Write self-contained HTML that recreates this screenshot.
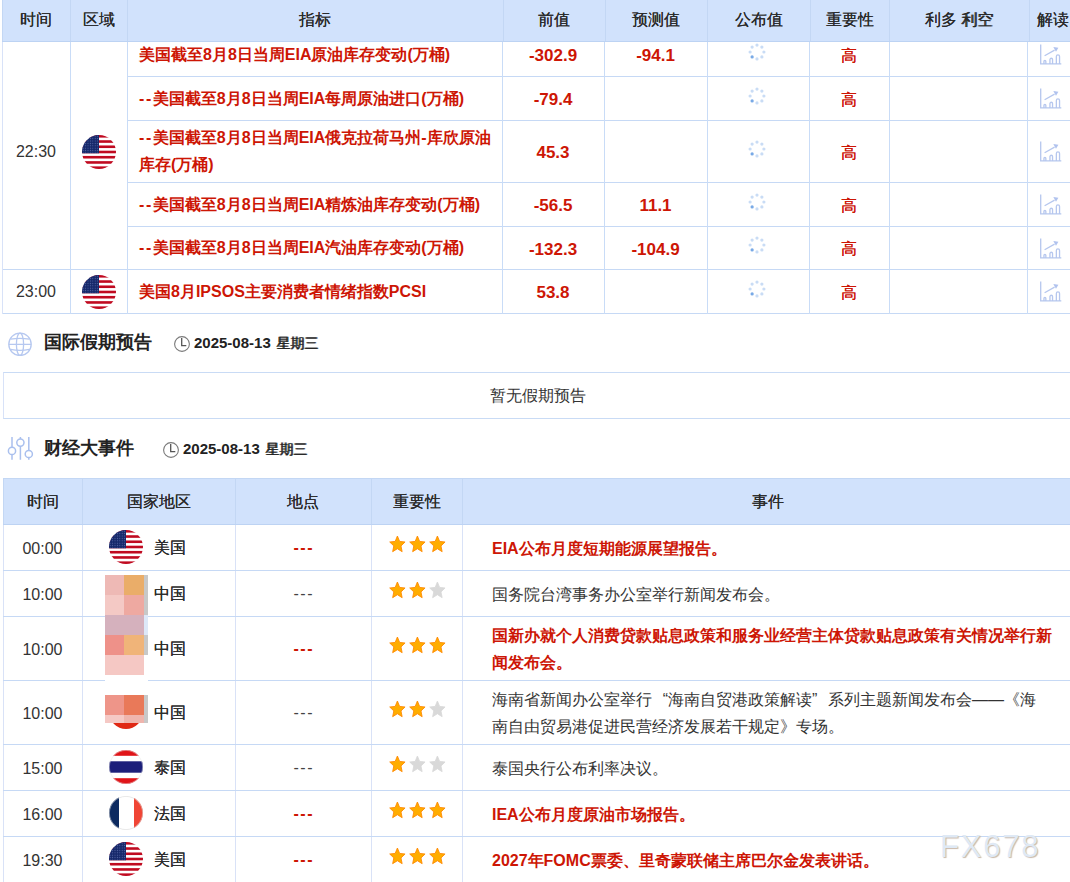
<!DOCTYPE html>
<html><head><meta charset="utf-8">
<style>
html,body{margin:0;padding:0;background:#fff}
body{width:1070px;height:882px;overflow:hidden;position:relative;font-family:"Liberation Sans",sans-serif;color:#333}
.a{position:absolute}
.hl{position:absolute;height:1px;background:#c6d9f5}
.vl{position:absolute;width:1px;background:#c9dcf7}
.hv{position:absolute;width:1px;background:#c3d7f4}
.hd{position:absolute;background:#d1e2fc}
.c{position:absolute;text-align:center;white-space:nowrap}
.t{position:absolute;white-space:nowrap}
.red{color:#cd1605;font-weight:bold}
.h16{font-size:16px}
</style></head><body>

<svg width="0" height="0" style="position:absolute">
<defs>
<clipPath id="cc"><circle cx="17" cy="17" r="17"/></clipPath>
<pattern id="stars" width="2.4" height="2.4" patternUnits="userSpaceOnUse"><rect width="2.4" height="2.4" fill="#16286a"/><circle cx="1.2" cy="1.2" r="0.55" fill="#5a6aa8"/></pattern>
<symbol id="us" viewBox="0 0 34 34">
<g clip-path="url(#cc)">
<rect width="34" height="34" fill="#fff"/>
<rect y="0" width="34" height="2.6" fill="#c00a20"/>
<rect y="5.23" width="34" height="2.6" fill="#c00a20"/>
<rect y="10.46" width="34" height="2.6" fill="#c00a20"/>
<rect y="15.69" width="34" height="2.6" fill="#c00a20"/>
<rect y="20.92" width="34" height="2.6" fill="#c00a20"/>
<rect y="26.15" width="34" height="2.6" fill="#c00a20"/>
<rect y="31.38" width="34" height="2.62" fill="#c00a20"/>
<rect width="17" height="18.3" fill="url(#stars)"/>
</g>
</symbol>
<symbol id="th" viewBox="0 0 34 34">
<g clip-path="url(#cc)">
<rect width="34" height="34" fill="#fff"/>
<rect y="0" width="34" height="5.8" fill="#e01418"/>
<rect y="11.3" width="34" height="11.4" fill="#1c1f7a"/>
<rect y="28.2" width="34" height="5.8" fill="#e01418"/>
</g>
<circle cx="17" cy="17" r="16.6" fill="none" stroke="#e4e4e4" stroke-width="0.8" stroke-opacity="0.6"/>
</symbol>
<symbol id="fr" viewBox="0 0 34 34">
<g clip-path="url(#cc)">
<rect width="34" height="34" fill="#fff"/>
<rect x="0" width="10" height="34" fill="#0c2a60"/>
<rect x="25" width="9" height="34" fill="#f04535"/>
</g>
<circle cx="17" cy="17" r="16.6" fill="none" stroke="#d8d8d8" stroke-width="0.8" stroke-opacity="0.7"/>
</symbol>
<symbol id="spin" viewBox="-10 -10 20 20">
<g fill="#c9dcf5">
<circle cx="0" cy="-6.9" r="1.6"/>
<circle cx="4.88" cy="-4.88" r="1.6"/>
<circle cx="6.9" cy="0" r="1.6"/>
<circle cx="4.88" cy="4.88" r="1.6"/>
<circle cx="0" cy="6.9" r="1.6"/>
<circle cx="-6.9" cy="0" r="1.6"/>
<circle cx="-4.88" cy="-4.88" r="1.6"/>
</g>
<circle cx="-4.88" cy="4.88" r="1.65" fill="#78a9e6"/>
</symbol>
<symbol id="chart" viewBox="0 0 24 24">
<g fill="none" stroke="#b6c7ee" stroke-width="1.3">
<path d="M1.7 0.5V19.9H22.3"/>
<path d="M4.95 20V17.4a0.95 0.95 0 0 1 1.9 0V20"/>
<path d="M10.95 20V15.55a1.3 1.3 0 0 1 2.6 0V20"/>
<path d="M17.35 20V12.45a1.6 1.6 0 0 1 3.2 0V20"/>
<path d="M5.6 11.7L15.6 6.1"/>
</g>
<path d="M14.3 2.9L19.4 3.8L17 7.7Z" fill="#b0c2ee"/>
</symbol>
<symbol id="star" viewBox="0 0 16 16" preserveAspectRatio="none">
<path d="M8.00 0.90L10.12 5.69L15.32 6.22L11.42 9.71L12.53 14.83L8.00 12.20L3.47 14.83L4.58 9.71L0.68 6.22L5.88 5.69Z" fill="#ffad00" stroke="#ff8800" stroke-width="0.8" stroke-linejoin="round"/>
</symbol>
<symbol id="stargr" viewBox="0 0 16 16" preserveAspectRatio="none">
<path d="M8.00 0.90L10.12 5.69L15.32 6.22L11.42 9.71L12.53 14.83L8.00 12.20L3.47 14.83L4.58 9.71L0.68 6.22L5.88 5.69Z" fill="#d9d9d9" stroke="#d9d9d9" stroke-width="0.8" stroke-linejoin="round"/>
</symbol>
</defs>
</svg>

<div class="hl" style="left:127px;top:76px;width:943px"></div>
<div class="hl" style="left:127px;top:120px;width:943px"></div>
<div class="hl" style="left:127px;top:182px;width:943px"></div>
<div class="hl" style="left:127px;top:226px;width:943px"></div>
<div class="hl" style="left:2px;top:269px;width:1068px"></div>
<div class="hl" style="left:2px;top:313px;width:1068px"></div>
<div class="vl" style="left:2px;top:0px;height:314px;background:#d8e2f8"></div>
<div class="vl" style="left:70px;top:0px;height:314px"></div>
<div class="vl" style="left:127px;top:0px;height:314px"></div>
<div class="vl" style="left:502px;top:0px;height:314px"></div>
<div class="vl" style="left:604px;top:0px;height:314px"></div>
<div class="vl" style="left:707px;top:0px;height:314px"></div>
<div class="vl" style="left:809px;top:0px;height:314px"></div>
<div class="vl" style="left:889px;top:0px;height:314px"></div>
<div class="vl" style="left:1027px;top:0px;height:314px"></div>
<div class="t red" style="left:139px;top:40.5px;font-size:16px;line-height:27px">美国截至8月8日当周EIA原油库存变动(万桶)</div>
<div class="c red" style="left:502px;width:102px;top:42.0px;font-size:17px;line-height:27px">-302.9</div>
<div class="c red" style="left:604px;width:103px;top:42.0px;font-size:17px;line-height:27px">-94.1</div>
<svg class="a" style="left:747px;top:41.8px" width="20" height="20"><use href="#spin"/></svg>
<div class="c" style="left:809px;width:80px;top:41.5px;font-size:16px;line-height:27px;color:#cd1605;text-shadow:0.45px 0 0 #cd1605">高</div>
<svg class="a" style="left:1039.1px;top:44.0px" width="24" height="24"><use href="#chart"/></svg>
<div class="t red" style="left:139px;top:84.5px;font-size:16px;line-height:27px"><span style="letter-spacing:1.6px">--</span>美国截至8月8日当周EIA每周原油进口(万桶)</div>
<div class="c red" style="left:502px;width:102px;top:86.0px;font-size:17px;line-height:27px">-79.4</div>
<svg class="a" style="left:747px;top:85.8px" width="20" height="20"><use href="#spin"/></svg>
<div class="c" style="left:809px;width:80px;top:85.5px;font-size:16px;line-height:27px;color:#cd1605;text-shadow:0.45px 0 0 #cd1605">高</div>
<svg class="a" style="left:1039.1px;top:88.0px" width="24" height="24"><use href="#chart"/></svg>
<div class="t red" style="left:139px;top:124.0px;font-size:16px;line-height:27px"><span style="letter-spacing:1.6px">--</span>美国截至8月8日当周EIA俄克拉荷马州-库欣原油<br>库存(万桶)</div>
<div class="c red" style="left:502px;width:102px;top:139.0px;font-size:17px;line-height:27px">45.3</div>
<svg class="a" style="left:747px;top:138.8px" width="20" height="20"><use href="#spin"/></svg>
<div class="c" style="left:809px;width:80px;top:138.5px;font-size:16px;line-height:27px;color:#cd1605;text-shadow:0.45px 0 0 #cd1605">高</div>
<svg class="a" style="left:1039.1px;top:141.0px" width="24" height="24"><use href="#chart"/></svg>
<div class="t red" style="left:139px;top:190.5px;font-size:16px;line-height:27px"><span style="letter-spacing:1.6px">--</span>美国截至8月8日当周EIA精炼油库存变动(万桶)</div>
<div class="c red" style="left:502px;width:102px;top:192.0px;font-size:17px;line-height:27px">-56.5</div>
<div class="c red" style="left:604px;width:103px;top:192.0px;font-size:17px;line-height:27px">11.1</div>
<svg class="a" style="left:747px;top:191.8px" width="20" height="20"><use href="#spin"/></svg>
<div class="c" style="left:809px;width:80px;top:191.5px;font-size:16px;line-height:27px;color:#cd1605;text-shadow:0.45px 0 0 #cd1605">高</div>
<svg class="a" style="left:1039.1px;top:194.0px" width="24" height="24"><use href="#chart"/></svg>
<div class="t red" style="left:139px;top:234.0px;font-size:16px;line-height:27px"><span style="letter-spacing:1.6px">--</span>美国截至8月8日当周EIA汽油库存变动(万桶)</div>
<div class="c red" style="left:502px;width:102px;top:235.5px;font-size:17px;line-height:27px">-132.3</div>
<div class="c red" style="left:604px;width:103px;top:235.5px;font-size:17px;line-height:27px">-104.9</div>
<svg class="a" style="left:747px;top:235.3px" width="20" height="20"><use href="#spin"/></svg>
<div class="c" style="left:809px;width:80px;top:235.0px;font-size:16px;line-height:27px;color:#cd1605;text-shadow:0.45px 0 0 #cd1605">高</div>
<svg class="a" style="left:1039.1px;top:237.5px" width="24" height="24"><use href="#chart"/></svg>
<div class="t red" style="left:139px;top:277.5px;font-size:16px;line-height:27px">美国8月IPSOS主要消费者情绪指数PCSI</div>
<div class="c red" style="left:502px;width:102px;top:279.0px;font-size:17px;line-height:27px">53.8</div>
<svg class="a" style="left:747px;top:278.8px" width="20" height="20"><use href="#spin"/></svg>
<div class="c" style="left:809px;width:80px;top:278.5px;font-size:16px;line-height:27px;color:#cd1605;text-shadow:0.45px 0 0 #cd1605">高</div>
<svg class="a" style="left:1039.1px;top:281.0px" width="24" height="24"><use href="#chart"/></svg>
<div class="c" style="left:2px;width:68px;top:137.5px;font-size:16px;line-height:27px">22:30</div>
<div class="c" style="left:2px;width:68px;top:277.5px;font-size:16px;line-height:27px">23:00</div>
<svg class="a" style="left:82px;top:134.5px" width="34" height="34"><use href="#us"/></svg>
<svg class="a" style="left:82px;top:274.5px" width="34" height="34"><use href="#us"/></svg>
<div class="hd" style="left:0;top:0;width:1070px;height:41px"></div>
<div class="a" style="left:0;top:0;width:2px;height:41px;background:#fff"></div>
<div class="a" style="left:2px;top:41px;width:1068px;height:1px;background:#bdd3f3"></div>
<div class="hv" style="left:2px;top:0;height:41px"></div>
<div class="hv" style="left:70px;top:0;height:41px"></div>
<div class="hv" style="left:127px;top:0;height:41px"></div>
<div class="hv" style="left:503px;top:0;height:41px"></div>
<div class="hv" style="left:605px;top:0;height:41px"></div>
<div class="hv" style="left:707px;top:0;height:41px"></div>
<div class="hv" style="left:810px;top:0;height:41px"></div>
<div class="hv" style="left:889px;top:0;height:41px"></div>
<div class="hv" style="left:1029px;top:0;height:41px"></div>
<div class="c" style="left:2px;width:68px;top:6px;font-size:16px;line-height:27px;color:#2a2a2a;text-shadow:0.4px 0 0 #2a2a2a">时间</div>
<div class="c" style="left:70px;width:57px;top:6px;font-size:16px;line-height:27px;color:#2a2a2a;text-shadow:0.4px 0 0 #2a2a2a">区域</div>
<div class="c" style="left:127px;width:376px;top:6px;font-size:16px;line-height:27px;color:#2a2a2a;text-shadow:0.4px 0 0 #2a2a2a">指标</div>
<div class="c" style="left:503px;width:102px;top:6px;font-size:16px;line-height:27px;color:#2a2a2a;text-shadow:0.4px 0 0 #2a2a2a">前值</div>
<div class="c" style="left:605px;width:102px;top:6px;font-size:16px;line-height:27px;color:#2a2a2a;text-shadow:0.4px 0 0 #2a2a2a">预测值</div>
<div class="c" style="left:707px;width:103px;top:6px;font-size:16px;line-height:27px;color:#2a2a2a;text-shadow:0.4px 0 0 #2a2a2a">公布值</div>
<div class="c" style="left:810px;width:79px;top:6px;font-size:16px;line-height:27px;color:#2a2a2a;text-shadow:0.4px 0 0 #2a2a2a">重要性</div>
<div class="c" style="left:889px;width:140px;top:6px;font-size:16px;line-height:27px;color:#2a2a2a;text-shadow:0.4px 0 0 #2a2a2a">利多 利空</div>
<div class="c" style="left:1029px;width:47px;top:6px;font-size:16px;line-height:27px;color:#2a2a2a;text-shadow:0.4px 0 0 #2a2a2a">解读</div>
<svg class="a" style="left:8px;top:332px" width="24" height="24" viewBox="0 0 24 24"><g fill="none" stroke="#b6c8f0" stroke-width="1.3">
<circle cx="12" cy="12.3" r="11.2"/><ellipse cx="12" cy="12.3" rx="3.6" ry="11.2"/>
<path d="M2.6 7.2Q12 5.4 21.4 7.2M0.8 12.3H23.2M2.6 17.4Q12 19.2 21.4 17.4"/></g></svg>
<div class="t" style="left:44px;top:328px;font-size:18px;line-height:28px;font-weight:bold;color:#222">国际假期预告</div>
<svg class="a" style="left:173px;top:335px" width="18" height="18" viewBox="0 0 18 18"><circle cx="9" cy="9" r="7.4" fill="none" stroke="#7a7a7a" stroke-width="1.1"/><path d="M8.7 2.9V10.6H13.3" fill="none" stroke="#555" stroke-width="1.3"/></svg>
<div class="t" style="left:194px;top:333px;font-size:15px;line-height:20px;font-weight:bold;color:#222">2025-08-13 <span style="font-weight:normal;font-size:14px;text-shadow:0.3px 0 0 #222;margin-left:1.5px">星期三</span></div>
<div class="a" style="left:3px;top:372px;width:1068px;height:45px;border:1px solid #c9dbf5;border-left-color:#d8e2f8;border-right:none"></div>
<div class="c" style="left:3px;width:1070px;top:382px;font-size:16px;line-height:27px;color:#333">暂无假期预告</div>
<svg class="a" style="left:0px;top:430px" width="40" height="40" viewBox="0 0 40 40"><g fill="none" stroke="#aac0ee" stroke-width="1.5">
<path d="M12 7V17.2M12 24.6V29.7M20.4 7V9M20.4 16.2V29.7M28.8 7V20.3M28.8 27.7V29.7"/>
<circle cx="12" cy="20.9" r="3.6"/><circle cx="20.4" cy="12.6" r="3.6"/><circle cx="28.8" cy="24" r="3.6"/></g></svg>
<div class="t" style="left:44px;top:434px;font-size:18px;line-height:28px;font-weight:bold;color:#222">财经大事件</div>
<svg class="a" style="left:162px;top:441px" width="18" height="18" viewBox="0 0 18 18"><circle cx="9" cy="9" r="7.4" fill="none" stroke="#7a7a7a" stroke-width="1.1"/><path d="M8.7 2.9V10.6H13.3" fill="none" stroke="#555" stroke-width="1.3"/></svg>
<div class="t" style="left:183px;top:438.5px;font-size:15px;line-height:20px;font-weight:bold;color:#222">2025-08-13 <span style="font-weight:normal;font-size:14px;text-shadow:0.3px 0 0 #222;margin-left:1.5px">星期三</span></div>
<div class="hd" style="left:3px;top:478px;width:1067px;height:46px"></div>
<div class="a" style="left:3px;top:478px;width:1067px;height:1px;background:#c3d7f4"></div>
<div class="a" style="left:3px;top:524px;width:1067px;height:1px;background:#bdd3f3"></div>
<div class="hv" style="left:3px;top:478px;height:46px"></div>
<div class="vl" style="left:3px;top:525px;height:357px;background:#d9e2f7"></div>
<div class="hv" style="left:82px;top:478px;height:46px"></div>
<div class="vl" style="left:82px;top:525px;height:357px;background:#d9e2f7"></div>
<div class="hv" style="left:235px;top:478px;height:46px"></div>
<div class="vl" style="left:235px;top:525px;height:357px;background:#d9e2f7"></div>
<div class="hv" style="left:371px;top:478px;height:46px"></div>
<div class="vl" style="left:371px;top:525px;height:357px;background:#d9e2f7"></div>
<div class="hv" style="left:462px;top:478px;height:46px"></div>
<div class="vl" style="left:462px;top:525px;height:357px;background:#d9e2f7"></div>
<div class="hl" style="left:3px;top:570px;width:1067px"></div>
<div class="hl" style="left:3px;top:616px;width:1067px"></div>
<div class="hl" style="left:3px;top:680px;width:1067px"></div>
<div class="hl" style="left:3px;top:744px;width:1067px"></div>
<div class="hl" style="left:3px;top:790px;width:1067px"></div>
<div class="hl" style="left:3px;top:836px;width:1067px"></div>
<div class="c" style="left:3px;width:79px;top:487.5px;font-size:16px;line-height:27px;color:#2a2a2a;text-shadow:0.4px 0 0 #2a2a2a">时间</div>
<div class="c" style="left:82px;width:153px;top:487.5px;font-size:16px;line-height:27px;color:#2a2a2a;text-shadow:0.4px 0 0 #2a2a2a">国家地区</div>
<div class="c" style="left:235px;width:136px;top:487.5px;font-size:16px;line-height:27px;color:#2a2a2a;text-shadow:0.4px 0 0 #2a2a2a">地点</div>
<div class="c" style="left:371px;width:91px;top:487.5px;font-size:16px;line-height:27px;color:#2a2a2a;text-shadow:0.4px 0 0 #2a2a2a">重要性</div>
<div class="c" style="left:462px;width:611px;top:487.5px;font-size:16px;line-height:27px;color:#2a2a2a;text-shadow:0.4px 0 0 #2a2a2a">事件</div>
<div class="c" style="left:3px;width:79px;top:534.8px;font-size:16px;line-height:27px">00:00</div>
<svg class="a" style="left:109px;top:530.0px" width="34" height="34"><use href="#us"/></svg>
<div class="t" style="left:154px;top:533.5px;font-size:16px;line-height:27px;color:#2a2a2a;text-shadow:0.4px 0 0 #2a2a2a">美国</div>
<div class="c red" style="left:235px;width:136px;top:533.5px;font-size:16px;line-height:27px;letter-spacing:1.6px;text-indent:1.6px">---</div>
<svg class="a" style="left:389.20000000000005px;top:534.5px" width="16.8" height="18"><use href="#star"/></svg>
<svg class="a" style="left:409.30000000000007px;top:534.5px" width="16.8" height="18"><use href="#star"/></svg>
<svg class="a" style="left:429.40000000000003px;top:534.5px" width="16.8" height="18"><use href="#star"/></svg>
<div class="t red" style="left:492px;top:534.8px;font-size:16px;line-height:27px;">EIA公布月度短期能源展望报告。</div>
<div class="c" style="left:3px;width:79px;top:580.8px;font-size:16px;line-height:27px">10:00</div>
<svg class="a" style="left:109px;top:576.0px" width="34" height="34"><circle cx="17" cy="17" r="17" fill="#e02814"/></svg>
<div class="t" style="left:154px;top:579.5px;font-size:16px;line-height:27px;color:#2a2a2a;text-shadow:0.4px 0 0 #2a2a2a">中国</div>
<div class="c" style="left:235px;width:136px;top:579.5px;font-size:16px;line-height:27px;color:#444;letter-spacing:1.6px;text-indent:1.6px">---</div>
<svg class="a" style="left:389.20000000000005px;top:580.5px" width="16.8" height="18"><use href="#star"/></svg>
<svg class="a" style="left:409.30000000000007px;top:580.5px" width="16.8" height="18"><use href="#star"/></svg>
<svg class="a" style="left:429.40000000000003px;top:580.5px" width="16.8" height="18"><use href="#stargr"/></svg>
<div class="t" style="left:492px;top:580.8px;font-size:16px;line-height:27px;color:#333;">国务院台湾事务办公室举行新闻发布会。</div>
<div class="c" style="left:3px;width:79px;top:635.8px;font-size:16px;line-height:27px">10:00</div>
<svg class="a" style="left:109px;top:631.0px" width="34" height="34"><circle cx="17" cy="17" r="17" fill="#e02814"/></svg>
<div class="t" style="left:154px;top:634.5px;font-size:16px;line-height:27px;color:#2a2a2a;text-shadow:0.4px 0 0 #2a2a2a">中国</div>
<div class="c red" style="left:235px;width:136px;top:634.5px;font-size:16px;line-height:27px;letter-spacing:1.6px;text-indent:1.6px">---</div>
<svg class="a" style="left:389.20000000000005px;top:635.5px" width="16.8" height="18"><use href="#star"/></svg>
<svg class="a" style="left:409.30000000000007px;top:635.5px" width="16.8" height="18"><use href="#star"/></svg>
<svg class="a" style="left:429.40000000000003px;top:635.5px" width="16.8" height="18"><use href="#star"/></svg>
<div class="t red" style="left:492px;top:622.0px;font-size:16px;line-height:27px;">国新办就个人消费贷款贴息政策和服务业经营主体贷款贴息政策有关情况举行新<br>闻发布会。</div>
<div class="c" style="left:3px;width:79px;top:699.8px;font-size:16px;line-height:27px">10:00</div>
<svg class="a" style="left:109px;top:695.0px" width="34" height="34"><circle cx="17" cy="17" r="17" fill="#e02814"/></svg>
<div class="t" style="left:154px;top:698.5px;font-size:16px;line-height:27px;color:#2a2a2a;text-shadow:0.4px 0 0 #2a2a2a">中国</div>
<div class="c" style="left:235px;width:136px;top:698.5px;font-size:16px;line-height:27px;color:#444;letter-spacing:1.6px;text-indent:1.6px">---</div>
<svg class="a" style="left:389.20000000000005px;top:699.5px" width="16.8" height="18"><use href="#star"/></svg>
<svg class="a" style="left:409.30000000000007px;top:699.5px" width="16.8" height="18"><use href="#star"/></svg>
<svg class="a" style="left:429.40000000000003px;top:699.5px" width="16.8" height="18"><use href="#stargr"/></svg>
<div class="t" style="left:492px;top:686.0px;font-size:16px;line-height:27px;color:#333;">海南省新闻办公室举行<span style="display:inline-block;width:16px;text-align:right">“</span>海南自贸港政策解读<span style="display:inline-block;width:16px;text-align:left">”</span>系列主题新闻发布会——《海<br>南自由贸易港促进民营经济发展若干规定》专场。</div>
<div class="c" style="left:3px;width:79px;top:754.8px;font-size:16px;line-height:27px">15:00</div>
<svg class="a" style="left:109px;top:750.0px" width="34" height="34"><use href="#th"/></svg>
<div class="t" style="left:154px;top:753.5px;font-size:16px;line-height:27px;color:#2a2a2a;text-shadow:0.4px 0 0 #2a2a2a">泰国</div>
<div class="c" style="left:235px;width:136px;top:753.5px;font-size:16px;line-height:27px;color:#444;letter-spacing:1.6px;text-indent:1.6px">---</div>
<svg class="a" style="left:389.20000000000005px;top:754.5px" width="16.8" height="18"><use href="#star"/></svg>
<svg class="a" style="left:409.30000000000007px;top:754.5px" width="16.8" height="18"><use href="#stargr"/></svg>
<svg class="a" style="left:429.40000000000003px;top:754.5px" width="16.8" height="18"><use href="#stargr"/></svg>
<div class="t" style="left:492px;top:754.8px;font-size:16px;line-height:27px;color:#333;">泰国央行公布利率决议。</div>
<div class="c" style="left:3px;width:79px;top:800.8px;font-size:16px;line-height:27px">16:00</div>
<svg class="a" style="left:109px;top:796.0px" width="34" height="34"><use href="#fr"/></svg>
<div class="t" style="left:154px;top:799.5px;font-size:16px;line-height:27px;color:#2a2a2a;text-shadow:0.4px 0 0 #2a2a2a">法国</div>
<div class="c red" style="left:235px;width:136px;top:799.5px;font-size:16px;line-height:27px;letter-spacing:1.6px;text-indent:1.6px">---</div>
<svg class="a" style="left:389.20000000000005px;top:800.5px" width="16.8" height="18"><use href="#star"/></svg>
<svg class="a" style="left:409.30000000000007px;top:800.5px" width="16.8" height="18"><use href="#star"/></svg>
<svg class="a" style="left:429.40000000000003px;top:800.5px" width="16.8" height="18"><use href="#star"/></svg>
<div class="t red" style="left:492px;top:800.8px;font-size:16px;line-height:27px;">IEA公布月度原油市场报告。</div>
<div class="c" style="left:3px;width:79px;top:846.8px;font-size:16px;line-height:27px">19:30</div>
<svg class="a" style="left:109px;top:842.0px" width="34" height="34"><use href="#us"/></svg>
<div class="t" style="left:154px;top:845.5px;font-size:16px;line-height:27px;color:#2a2a2a;text-shadow:0.4px 0 0 #2a2a2a">美国</div>
<div class="c red" style="left:235px;width:136px;top:845.5px;font-size:16px;line-height:27px;letter-spacing:1.6px;text-indent:1.6px">---</div>
<svg class="a" style="left:389.20000000000005px;top:846.5px" width="16.8" height="18"><use href="#star"/></svg>
<svg class="a" style="left:409.30000000000007px;top:846.5px" width="16.8" height="18"><use href="#star"/></svg>
<svg class="a" style="left:429.40000000000003px;top:846.5px" width="16.8" height="18"><use href="#star"/></svg>
<div class="t red" style="left:492px;top:846.8px;font-size:16px;line-height:27px;">2027年FOMC票委、里奇蒙联储主席巴尔金发表讲话。</div>
<div class="a" style="left:105px;top:575px;width:19px;height:20px;background:#eeb9b5"></div>
<div class="a" style="left:124px;top:575px;width:20px;height:20px;background:#eaad69"></div>
<div class="a" style="left:144px;top:575px;width:4px;height:20px;background:#c8c8c8"></div>
<div class="a" style="left:105px;top:595px;width:19px;height:20px;background:#f4c9c5"></div>
<div class="a" style="left:124px;top:595px;width:20px;height:20px;background:#eea9a1"></div>
<div class="a" style="left:144px;top:595px;width:4px;height:20px;background:#c8c8c8"></div>
<div class="a" style="left:105px;top:615px;width:39px;height:20px;background:#d5b1bd"></div>
<div class="a" style="left:144px;top:615px;width:4px;height:20px;background:#dde8f8"></div>
<div class="a" style="left:105px;top:635px;width:19px;height:20px;background:#ee9189"></div>
<div class="a" style="left:124px;top:635px;width:20px;height:20px;background:#f0b479"></div>
<div class="a" style="left:144px;top:635px;width:4px;height:20px;background:#c8c8c8"></div>
<div class="a" style="left:105px;top:655px;width:39px;height:20px;background:#f5c8c4"></div>
<div class="a" style="left:105px;top:695px;width:19px;height:20px;background:#ee9589"></div>
<div class="a" style="left:124px;top:695px;width:20px;height:20px;background:#e97959"></div>
<div class="a" style="left:144px;top:695px;width:4px;height:28px;background:#c8c8c8"></div>
<div class="a" style="left:105px;top:715px;width:19px;height:8px;background:#f5c9c5"></div>
<div class="a" style="left:124px;top:715px;width:20px;height:8px;background:#efb5ad"></div>
<div class="a" style="left:105px;top:675px;width:43px;height:20px;background:#fff"></div>
<div class="t" style="left:940px;top:826.5px;font-size:31px;line-height:40px;letter-spacing:1.8px;color:#dfe9f5;text-shadow:1px 1px 1px #c9b9aa">FX678</div>
</body></html>
